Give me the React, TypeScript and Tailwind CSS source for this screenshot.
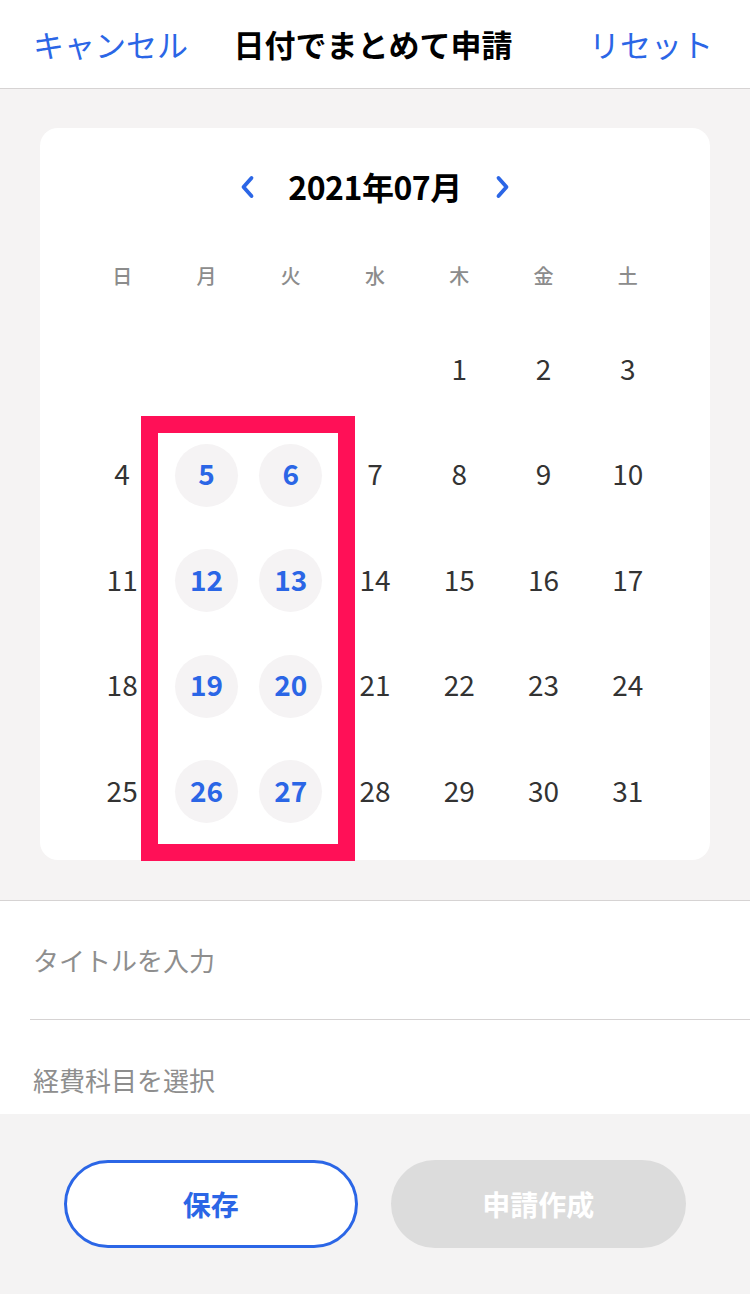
import React from "react";

const BLUE = "text-[#2b66e6]";

const weeks: (number | null)[][] = [
  [null, null, null, null, 1, 2, 3],
  [4, 5, 6, 7, 8, 9, 10],
  [11, 12, 13, 14, 15, 16, 17],
  [18, 19, 20, 21, 22, 23, 24],
  [25, 26, 27, 28, 29, 30, 31],
];
const selected = new Set([5, 6, 12, 13, 19, 20, 26, 27]);
const days = ["日", "月", "火", "水", "木", "金", "土"];

function Chevron({ dir }: { dir: "left" | "right" }) {
  return (
    <svg width="16" height="24" viewBox="0 0 16 24" fill="none">
      <path
        d={dir === "left" ? "M12.5 3 L4.5 12 L12.5 21" : "M3.5 3 L11.5 12 L3.5 21"}
        stroke="#2b66e6"
        strokeWidth="3.8"
        strokeLinecap="round"
        strokeLinejoin="round"
      />
    </svg>
  );
}

export default function App() {
  return (
    <div
      className="w-[750px] h-[1294px] bg-[#f5f3f3] flex flex-col overflow-hidden"
      style={{ fontFamily: '"Noto Sans CJK JP", "Noto Sans", sans-serif' }}
    >
      {/* Header */}
      <div className="h-[89px] bg-white border-b border-[#d6d3d3] grid grid-cols-[1fr_auto_1fr] items-center pl-[33px] pr-[37px] shrink-0">
        <div className={`text-[31px] ${BLUE} leading-none -mt-[2px]`}>キャンセル</div>
        <div className="text-[31px] font-bold text-black leading-none -mt-[2px]">日付でまとめて申請</div>
        <div className={`text-[31px] ${BLUE} leading-none text-right -mt-[2px]`}>リセット</div>
      </div>

      {/* Calendar area */}
      <div className="pt-[39px] pb-[40px] px-[40px] shrink-0">
        <div className="relative h-[732px] bg-white rounded-[18px] pt-[36px] px-[40px]">
          <div className="h-[46px] flex items-center justify-center">
            <Chevron dir="left" />
            <div className="mx-[33px] text-[32px] font-bold text-black leading-none tracking-[-0.5px] -mt-[2px]">
              2021年07月
            </div>
            <Chevron dir="right" />
          </div>
          <div className="mt-[46px] h-[40px] grid grid-cols-7 items-center">
            {days.map((d) => (
              <div key={d} className="text-center text-[20px] font-medium text-[#8c8c8c] leading-none">
                {d}
              </div>
            ))}
          </div>
          <div className="mt-[19px]">
            {weeks.map((w, i) => (
              <div key={i} className="h-[105.5px] grid grid-cols-7 items-center">
                {w.map((d, j) => (
                  <div key={j} className="flex items-center justify-center">
                    {d === null ? null : selected.has(d) ? (
                      <div className="w-[63px] h-[63px] mt-[4px] rounded-full bg-[#f5f3f4] flex items-center justify-center">
                        <span className={`text-[28px] font-bold ${BLUE} leading-none -mt-[4px]`}>{d}</span>
                      </div>
                    ) : (
                      <div className="text-[28px] text-[#333333] leading-none">{d}</div>
                    )}
                  </div>
                ))}
              </div>
            ))}
          </div>
          {/* Highlight box */}
          <div className="absolute left-[101px] top-[288px] w-[214px] h-[445px] border-[17px] border-[#ff1057] pointer-events-none" />
        </div>
      </div>

      {/* Form */}
      <div className="bg-white border-t border-[#d6d3d3] h-[214px] shrink-0 overflow-hidden">
        <div className="ml-[30px] h-[119px] border-b border-[#d6d3d3] flex items-center">
          <span className="pl-[3px] text-[26px] text-[#8e8e8e] leading-none">タイトルを入力</span>
        </div>
        <div className="ml-[30px] h-[120px] flex items-center">
          <span className="pl-[3px] text-[26px] text-[#8e8e8e] leading-none">経費科目を選択</span>
        </div>
      </div>

      {/* Bottom buttons */}
      <div className="flex-1 bg-[#f4f3f3] pt-[46px] px-[64px] flex gap-[33px] items-start">
        <button className={`w-[294px] h-[88px] rounded-full border-[3px] border-[#2b66e6] bg-white text-[28px] font-bold ${BLUE} leading-none`}>
          保存
        </button>
        <button className="w-[296px] h-[88px] rounded-full bg-[#dcdcdc] text-[28px] font-bold text-white leading-none">
          申請作成
        </button>
      </div>
    </div>
  );
}
